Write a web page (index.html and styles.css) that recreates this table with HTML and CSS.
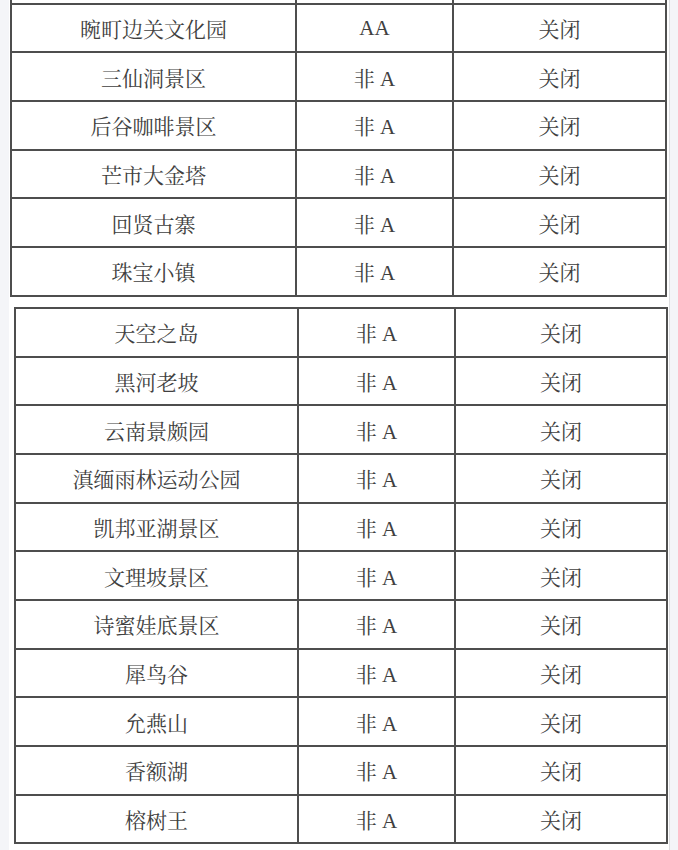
FILE: index.html
```html
<!DOCTYPE html>
<html lang="zh">
<head>
<meta charset="utf-8">
<title>景区列表</title>
<link rel="stylesheet" href="styles.css">
</head>
<body>
<div class="page">
  <table class="grid grid-a">
    <colgroup><col class="c1a"><col class="c2"><col class="c3"></colgroup>
    <tbody>
      <tr class="row row-hidden"><td></td><td></td><td></td></tr>
      <tr class="row"><td>晼町边关文化园</td><td>AA</td><td>关闭</td></tr>
      <tr class="row"><td>三仙洞景区</td><td>非 A</td><td>关闭</td></tr>
      <tr class="row"><td>后谷咖啡景区</td><td>非 A</td><td>关闭</td></tr>
      <tr class="row"><td>芒市大金塔</td><td>非 A</td><td>关闭</td></tr>
      <tr class="row"><td>回贤古寨</td><td>非 A</td><td>关闭</td></tr>
      <tr class="row"><td>珠宝小镇</td><td>非 A</td><td>关闭</td></tr>
    </tbody>
  </table>
  <table class="grid grid-b">
    <colgroup><col class="c1b"><col class="c2"><col class="c3"></colgroup>
    <tbody>
      <tr class="row"><td>天空之岛</td><td>非 A</td><td>关闭</td></tr>
      <tr class="row"><td>黑河老坡</td><td>非 A</td><td>关闭</td></tr>
      <tr class="row"><td>云南景颇园</td><td>非 A</td><td>关闭</td></tr>
      <tr class="row"><td>滇缅雨林运动公园</td><td>非 A</td><td>关闭</td></tr>
      <tr class="row"><td>凯邦亚湖景区</td><td>非 A</td><td>关闭</td></tr>
      <tr class="row"><td>文理坡景区</td><td>非 A</td><td>关闭</td></tr>
      <tr class="row"><td>诗蜜娃底景区</td><td>非 A</td><td>关闭</td></tr>
      <tr class="row"><td>犀鸟谷</td><td>非 A</td><td>关闭</td></tr>
      <tr class="row"><td>允燕山</td><td>非 A</td><td>关闭</td></tr>
      <tr class="row"><td>香额湖</td><td>非 A</td><td>关闭</td></tr>
      <tr class="row"><td>榕树王</td><td>非 A</td><td>关闭</td></tr>
    </tbody>
  </table>
</div>
</body>
</html>
```

FILE: styles.css
```css
html, body {
  margin: 0;
  padding: 0;
  background: #f4f5f8;
}
.page {
  margin-left: 9px;
  width: 660px;
  height: 850px;
  background: #ffffff;
  border-right: 1px solid #dcdde0;
  overflow: hidden;
}
.grid {
  border-collapse: collapse;
  table-layout: fixed;
  font-family: "Liberation Serif", "Noto Serif CJK SC", "Noto Sans CJK SC", serif;
  font-size: 21px;
  color: #404040;
  border: 2px solid #3a3a3a;
}
.grid td {
  border: 2px solid #4e4e4e;
  text-align: center;
  vertical-align: middle;
  padding: 0;
  height: 46.7px;
}
.grid-a {
  margin-left: 1px;
  width: 657px;
  margin-top: -46px;
}
.grid-b {
  margin-left: 5px;
  width: 654px;
  margin-top: 10px;
}
.c1a { width: 285px; }
.c1b { width: 283px; }
.c2 { width: 157px; }
```
